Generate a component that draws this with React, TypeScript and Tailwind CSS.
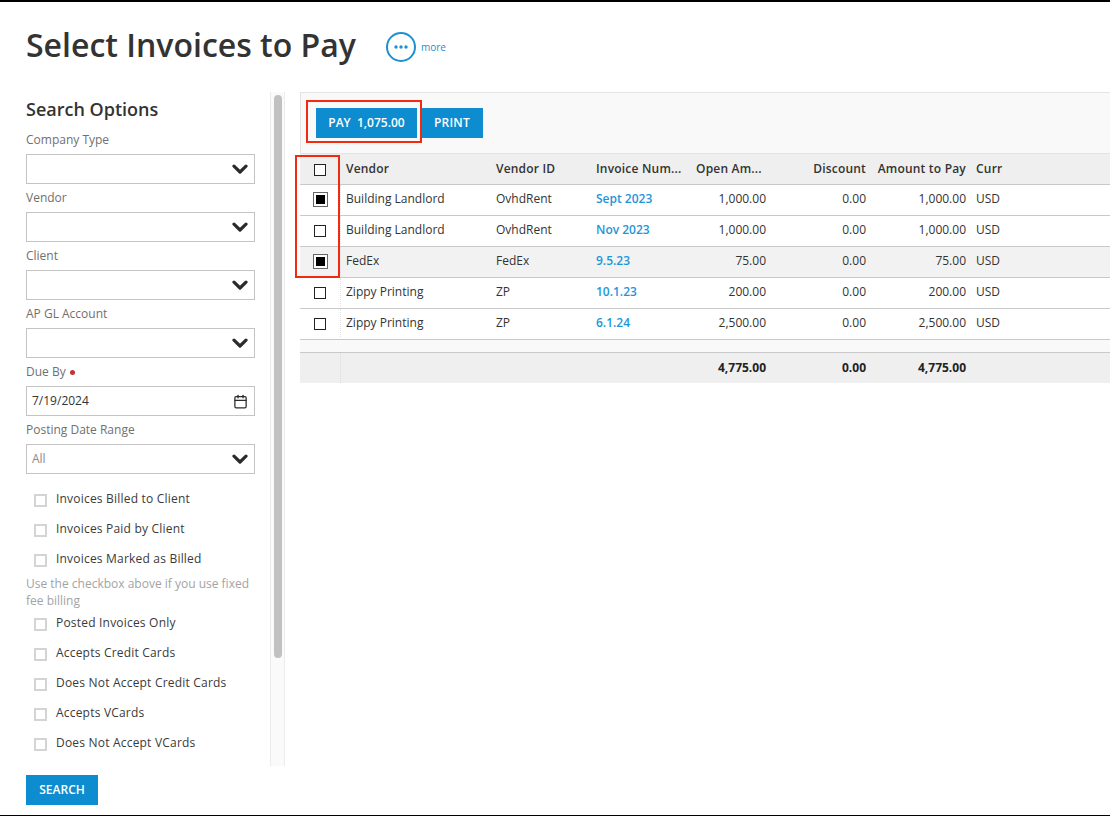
import { Calendar } from "lucide-react";

const font = { fontFamily: '"Open Sans", sans-serif' };

const rows = [
  { vendor: "Building Landlord", id: "OvhdRent", inv: "Sept 2023", open: "1,000.00", pay: "1,000.00", checked: true, shade: false },
  { vendor: "Building Landlord", id: "OvhdRent", inv: "Nov 2023", open: "1,000.00", pay: "1,000.00", checked: false, shade: false },
  { vendor: "FedEx", id: "FedEx", inv: "9.5.23", open: "75.00", pay: "75.00", checked: true, shade: true },
  { vendor: "Zippy Printing", id: "ZP", inv: "10.1.23", open: "200.00", pay: "200.00", checked: false, shade: false },
  { vendor: "Zippy Printing", id: "ZP", inv: "6.1.24", open: "2,500.00", pay: "2,500.00", checked: false, shade: false },
];

const gridCols = "grid grid-cols-[41px_149px_100px_100px_80px_100px_100px_1fr] items-center";

function Chevron() {
  return (
    <svg width="16" height="10" viewBox="0 0 16 10" fill="none" stroke="#2b2b2b" strokeWidth="3.2" strokeLinecap="round" strokeLinejoin="round">
      <path d="M2 2.2 L8 8 L14 2.2" />
    </svg>
  );
}

function SelectField({ label, value }: { label: string; value?: string }) {
  return (
    <div className="h-[58px]">
      <div className="h-[28px] pt-[5px] text-[12px] leading-[18px] text-[#707070]">{label}</div>
      <div className="flex h-[30px] items-center justify-between border border-[#c4c4c4] bg-white pl-[5px] pr-[6px] text-[12px] text-[#8a8a8a]">
        <span>{value}</span>
        <Chevron />
      </div>
    </div>
  );
}

function FilterCheck({ label }: { label: string }) {
  return (
    <div className="flex h-[30px] items-center pl-[8px] text-[12px] tracking-[0.2px] text-[#3a3a3a]">
      <span className="mr-[9px] mt-[3px] h-[13px] w-[13px] border-2 border-[#d4d4d4] bg-white" />
      <span>{label}</span>
    </div>
  );
}

function RowCheck({ checked }: { checked: boolean }) {
  if (checked) {
    return (
      <span className="mx-auto flex h-[15px] w-[15px] items-center justify-center border border-[#666] bg-white">
        <span className="h-[9px] w-[9px] bg-black" />
      </span>
    );
  }
  return <span className="mx-auto mt-[2px] block h-[12px] w-[12px] border border-[#222] bg-white" />;
}

export default function App() {
  return (
    <div style={font} className="relative flex h-[816px] w-[1110px] flex-col overflow-hidden bg-white">
      <div className="h-[2px] shrink-0 bg-black" />

      <div className="flex h-[90px] shrink-0 items-start pl-[26px] pt-[21px]">
        <h1 className="text-[32px] font-semibold leading-[44px] text-[#333]">Select Invoices to Pay</h1>
        <div className="ml-[30px] mt-[9px] flex items-center">
          <span className="flex h-[30px] w-[30px] items-center justify-center rounded-full border-2 border-[#1e90d2]">
            <svg width="14" height="4" viewBox="0 0 14 4" fill="#1e90d2">
              <circle cx="2" cy="2" r="1.7" />
              <circle cx="7" cy="2" r="1.7" />
              <circle cx="12" cy="2" r="1.7" />
            </svg>
          </span>
          <span className="ml-[5px] text-[10px] text-[#1e90d2]">more</span>
        </div>
      </div>

      <div className="flex min-h-0 flex-1">
        <div className="flex w-[285px] shrink-0 flex-col">
          <div className="flex h-[674px]">
            <div className="ml-[26px] w-[229px] shrink-0">
              <h2 className="h-[34px] pt-[4px] text-[18px] font-semibold leading-[26px] text-[#333]">Search Options</h2>
              <SelectField label="Company Type" />
              <SelectField label="Vendor" />
              <SelectField label="Client" />
              <SelectField label="AP GL Account" />
              <div className="h-[58px]">
                <div className="flex h-[28px] items-center gap-[4px] text-[12px] text-[#707070]">
                  Due By <span className="h-[5px] w-[5px] rounded-full bg-[#c0353a]" />
                </div>
                <div className="flex h-[30px] items-center justify-between border border-[#c4c4c4] pl-[5px] pr-[6px] text-[12px] text-[#333]">
                  <span>7/19/2024</span>
                  <Calendar size={15} strokeWidth={2} className="text-[#2b2b2b]" />
                </div>
              </div>
              <SelectField label="Posting Date Range" value="All" />
              <div className="h-[10px]" />
              <FilterCheck label="Invoices Billed to Client" />
              <FilterCheck label="Invoices Paid by Client" />
              <FilterCheck label="Invoices Marked as Billed" />
              <p className="mb-[-1px] pt-[1px] text-[12px] leading-[17px] text-[#a3a3a3]">
                Use the checkbox above if you use fixed fee billing
              </p>
              <FilterCheck label="Posted Invoices Only" />
              <FilterCheck label="Accepts Credit Cards" />
              <FilterCheck label="Does Not Accept Credit Cards" />
              <FilterCheck label="Accepts VCards" />
              <FilterCheck label="Does Not Accept VCards" />
            </div>
            <div className="ml-[15px] h-full w-[15px] border-x border-[#ececec] bg-[#fafafa] pl-[3px] pt-[3px]">
              <div className="h-[563px] w-[8px] rounded-[4px] bg-[#c1c1c1]" />
            </div>
          </div>
          <button className="ml-[26px] mt-[9px] h-[30px] w-[72px] bg-[#0e8cd0] text-[12px] font-semibold text-white">SEARCH</button>
        </div>

        <div className="ml-[15px] min-w-0 flex-1">
          <div className="flex h-[61px] items-start border-l border-t border-[#e4e4e4] bg-[#f9f9f9] pl-[15px] pt-[15px]">
            <button className="h-[30px] w-[101px] bg-[#0e8cd0] text-[12px] font-semibold text-white">PAY&nbsp; 1,075.00</button>
            <button className="ml-[4px] h-[30px] w-[62px] bg-[#0e8cd0] text-[12px] font-semibold tracking-[0.2px] text-white">PRINT</button>
          </div>

          <div className={`${gridCols} h-[32px] border-b-[1.5px] border-t border-[#c9c9c9] border-t-[#e4e4e4] bg-[#efefef] text-[12px] font-semibold tracking-[0.2px] text-[#333]`}>
            <span className="flex h-full items-center pr-[1px]">
              <RowCheck checked={false} />
            </span>
            <span className="pl-[5px]">Vendor</span>
            <span className="pl-[6px]">Vendor ID</span>
            <span className="pl-[6px]">Invoice Num...</span>
            <span className="pl-[6px]">Open Am...</span>
            <span className="pr-[4px] text-right">Discount</span>
            <span className="pr-[4px] text-right">Amount to Pay</span>
            <span className="pl-[6px]">Curr</span>
          </div>

          {rows.map((r, i) => (
            <div
              key={i}
              className={`${gridCols} h-[31px] border-b-[1.5px] border-[#c9c9c9] pb-[2px] text-[12px] text-[#333] ${r.shade ? "bg-[#f2f2f2]" : "bg-white"}`}
            >
              <span className="flex h-full items-center border-r border-dotted border-[#e2e2e2]">
                <RowCheck checked={r.checked} />
              </span>
              <span className="pl-[5px]">{r.vendor}</span>
              <span className="pl-[6px]">{r.id}</span>
              <span className="pl-[6px] font-semibold text-[#1e96d8]">{r.inv}</span>
              <span className="pr-[4px] text-right">{r.open}</span>
              <span className="pr-[4px] text-right">0.00</span>
              <span className="pr-[4px] text-right">{r.pay}</span>
              <span className="pl-[6px]">USD</span>
            </div>
          ))}

          <div className="h-[13px] border-b-[1.5px] border-[#c9c9c9] bg-[#f9f9f9]" />
          <div className={`${gridCols} h-[30px] bg-[#efefef] text-[12px] font-bold text-[#222]`}>
            <span className="h-full border-r border-dotted border-[#dcdcdc]" />
            <span />
            <span />
            <span />
            <span className="pr-[4px] text-right">4,775.00</span>
            <span className="pr-[4px] text-right">0.00</span>
            <span className="pr-[4px] text-right">4,775.00</span>
            <span />
          </div>
        </div>
      </div>

      <div className="h-[1px] shrink-0 bg-black" />

      {/* red annotation boxes drawn on top of the screenshot */}
      <div className="absolute left-[306px] top-[100px] h-[43px] w-[116px] border-2 border-[#f32a12]" />
      <div className="absolute left-[295px] top-[155px] h-[123px] w-[45px] border-2 border-[#f32a12]" />
    </div>
  );
}
